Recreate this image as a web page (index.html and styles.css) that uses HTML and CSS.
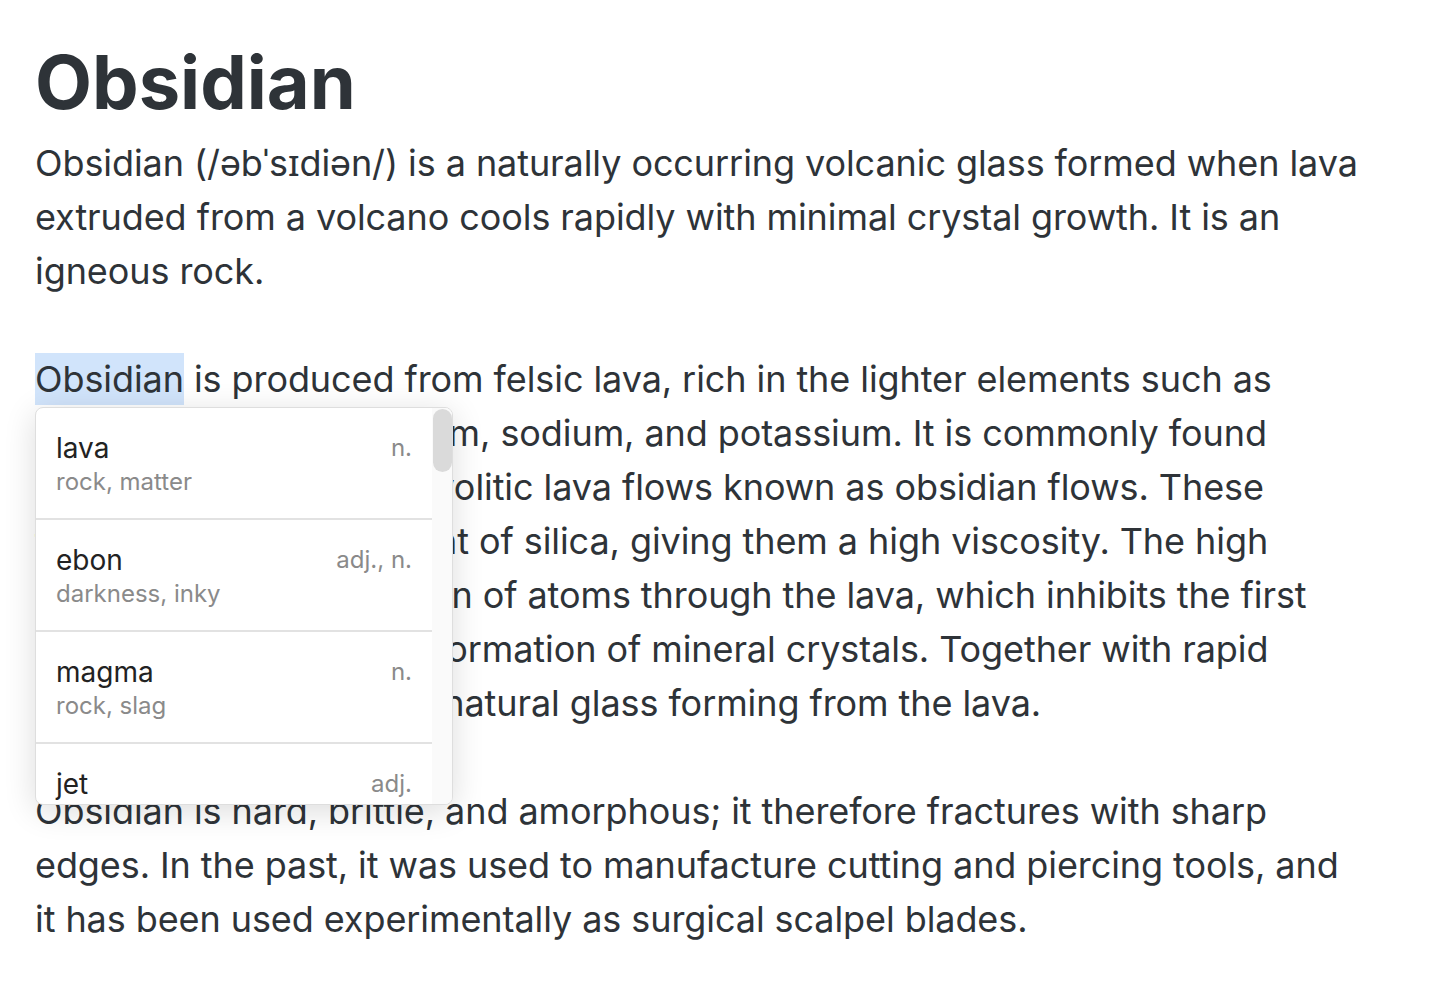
FILE: index.html
```html
<!DOCTYPE html>
<html lang="en">
<head>
    <meta charset="UTF-8">
    <meta name="viewport" content="width=device-width, initial-scale=1.0">
    <title>Obsidian</title>
    <link rel="stylesheet" href="styles.css">
</head>
<body>
    <div class="page">
        <h1>Obsidian</h1>
        <p>Obsidian (/əbˈsɪdiən/) is a naturally occurring volcanic glass formed when lava extruded from a volcano cools rapidly with minimal crystal growth. It is an igneous rock.</p>
        <p class="has-popup"><span class="selected">Obsidian</span> is produced from felsic lava, rich in the lighter elements such as silicon, oxygen, aluminium, sodium, and potassium. It is commonly found within the margins of rhyolitic lava flows known as obsidian flows. These flows have a high content of silica, giving them a high viscosity. The high viscosity inhibits diffusion of atoms through the lava, which inhibits the first step (nucleation) in the formation of mineral crystals. Together with rapid cooling, this results in a natural glass forming from the lava.
            <span class="popup">
                <span class="list">
                    <span class="item">
                        <span class="word">lava</span>
                        <span class="pos">n.</span>
                        <span class="syn">rock, matter</span>
                    </span>
                    <span class="item">
                        <span class="word">ebon</span>
                        <span class="pos">adj., n.</span>
                        <span class="syn">darkness, inky</span>
                    </span>
                    <span class="item">
                        <span class="word">magma</span>
                        <span class="pos">n.</span>
                        <span class="syn">rock, slag</span>
                    </span>
                    <span class="item">
                        <span class="word">jet</span>
                        <span class="pos">adj.</span>
                    </span>
                </span>
                <span class="track"><span class="thumb"></span></span>
            </span>
        </p>
        <p>Obsidian is hard, brittle, and amorphous; it therefore fractures with sharp edges. In the past, it was used to manufacture cutting and piercing tools, and it has been used experimentally as surgical scalpel blades.</p>
    </div>
</body>
</html>
```

FILE: styles.css
```css
body {
    margin: 0;
    padding: 0;
    background: #fff;
    color: #2e3338;
    font-family: Inter, "Noto Sans", sans-serif;
}

.page {
    padding: 39px 70px 40px 35px;
}

h1 {
    margin: 0;
    font-size: 74px;
    font-weight: 700;
    line-height: 86px;
}

p {
    margin: 11px 0 54px;
    font-size: 36px;
    line-height: 54px;
    letter-spacing: -0.08px;
}

p + p {
    margin-top: 0;
}

.has-popup {
    position: relative;
}

.selected {
    background: #d1e4fb;
    padding: 4px 0;
}

/* suggestion dropdown under the selected word */
.popup {
    position: absolute;
    top: 55px;
    left: 0;
    width: 416px;
    height: 396px;
    display: flex;
    overflow: hidden;
    letter-spacing: 0;
    background: #fff;
    border: 1px solid #dedede;
    border-radius: 8px;
    box-shadow: 0 6px 32px rgba(0, 0, 0, 0.14);
}

.list {
    flex: 1;
    display: block;
    overflow: hidden;
}

.track {
    width: 20px;
    background: #fafafa;
    display: block;
}

.thumb {
    display: block;
    height: 63px;
    margin: 1px 0 0 1px;
    border-radius: 10px;
    background: #dadada;
}

.item {
    display: grid;
    grid-template-columns: 1fr auto;
    padding: 23px 20px 19px;
    border-bottom: 2px solid #e2e2e2;
    height: 68px;
}

.word {
    font-size: 28px;
    line-height: 34px;
    color: #222;
}

.pos {
    font-size: 24px;
    line-height: 34px;
    color: #8a8a8a;
    text-align: right;
}

.syn {
    grid-column: 1 / 3;
    font-size: 24px;
    line-height: 34px;
    color: #8a8a8a;
}
```
